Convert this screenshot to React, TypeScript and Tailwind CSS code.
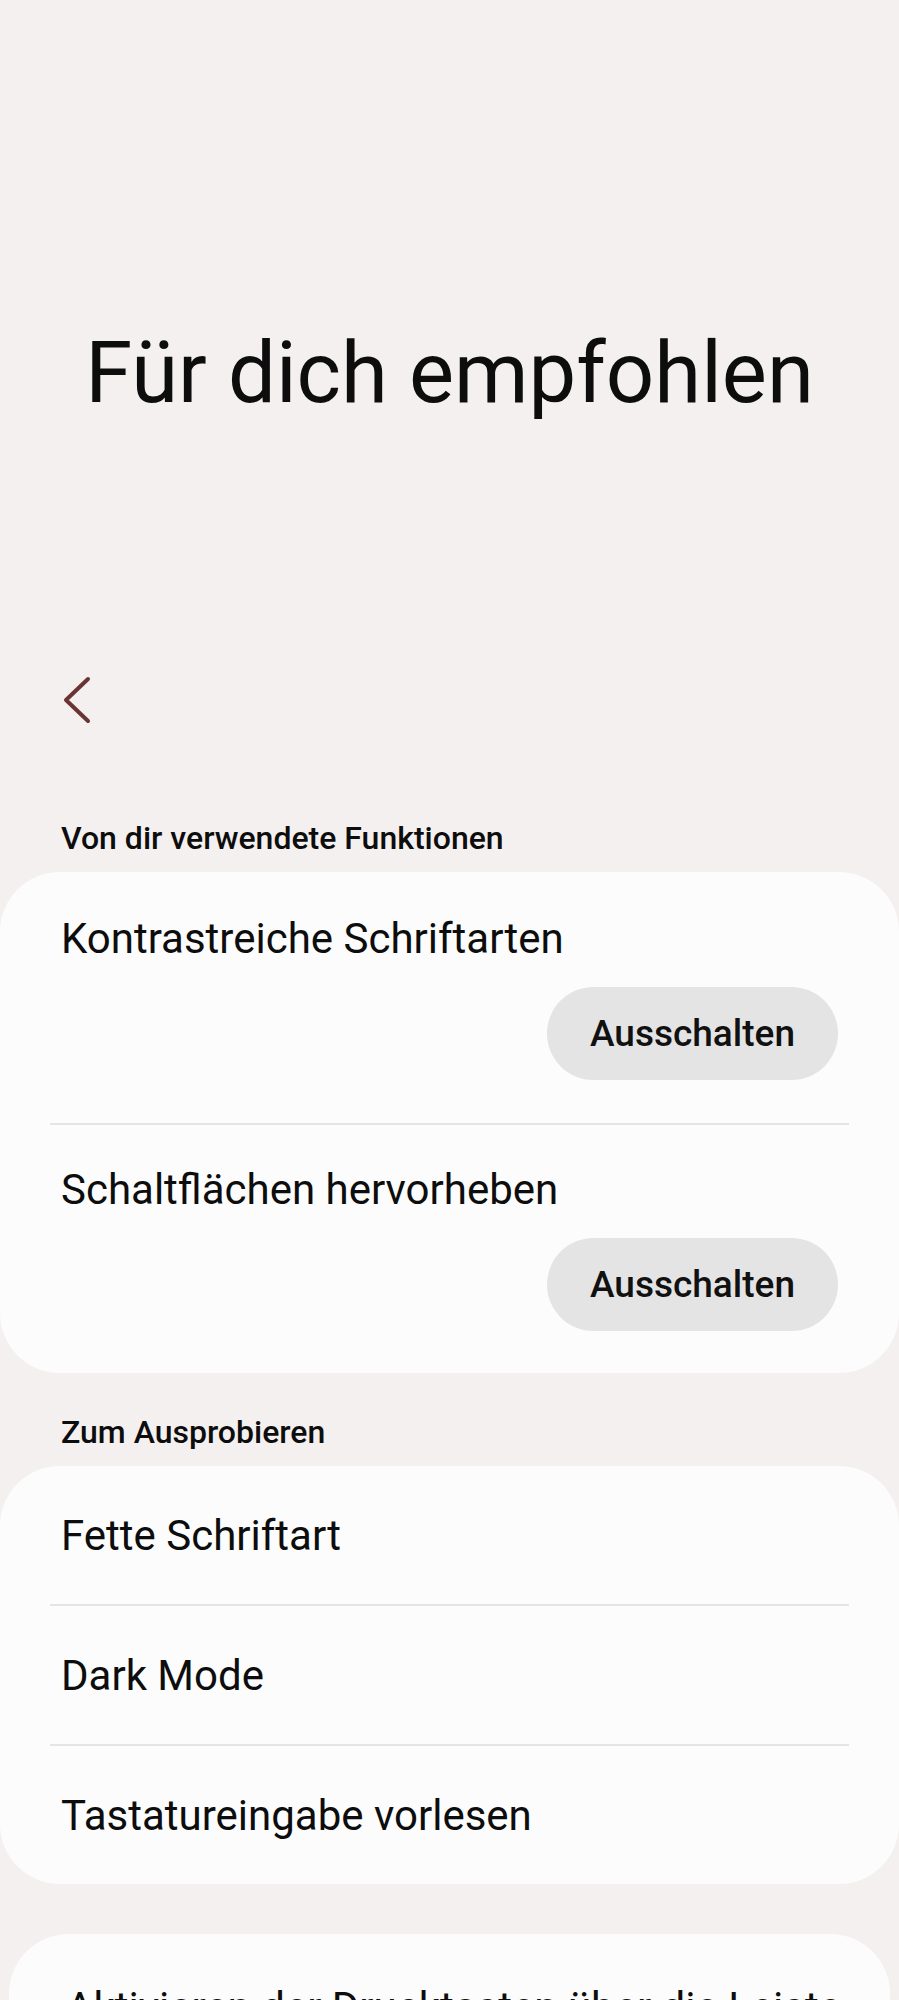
import React from 'react';

type Feature = { id: string; label: string };

const usedFeatures: Feature[] = [
  { id: 'contrast', label: 'Kontrastreiche Schriftarten' },
  { id: 'highlight', label: 'Schaltflächen hervorheben' },
];

const tryFeatures: Feature[] = [
  { id: 'bold', label: 'Fette Schriftart' },
  { id: 'dark', label: 'Dark Mode' },
  { id: 'keyboard', label: 'Tastatureingabe vorlesen' },
];

function Divider() {
  return <div className="mx-[50px] h-[2px] bg-[#e6e4e4]" />;
}

function BackChevron() {
  return (
    <svg width="48" height="48" viewBox="0 0 48 48" fill="none">
      <path
        d="M35 3 L13 24 L35 45"
        stroke="#6b3434"
        strokeWidth="4"
        strokeLinecap="round"
        strokeLinejoin="round"
      />
    </svg>
  );
}

export default function App() {
  return (
    <div className="min-h-screen bg-[#f4f0f0] font-['Roboto',sans-serif] text-[#0d0d0d] overflow-hidden">
      <h1 className="pt-[331px] text-center text-[85px] leading-none font-normal">Für dich empfohlen</h1>

      <div className="mt-[260px] pl-[53px]">
        <button className="block">
          <BackChevron />
        </button>
      </div>

      <h2 className="mt-[96px] pl-[61px] text-[32px] leading-[36px] font-medium">Von dir verwendete Funktionen</h2>

      <div className="mt-4 rounded-[60px] bg-[#fcfcfc]">
        {usedFeatures.map((f, i) => (
          <div key={f.id}>
            {i > 0 && <Divider />}
            <div className={`pl-[61px] pr-[61px] ${i === 0 ? 'pt-[43px] pb-[43px]' : 'pt-[41px] pb-[42px]'}`}>
              <div className="text-[42px] leading-[48px]">{f.label}</div>
              <div className="mt-6 flex justify-end">
                <button className="h-[93px] w-[291px] rounded-full bg-[#e4e4e4] text-[37px] font-medium text-[#111]">
                  Ausschalten
                </button>
              </div>
            </div>
          </div>
        ))}
      </div>

      <h2 className="mt-[41px] pl-[61px] text-[32px] leading-[36px] font-medium">Zum Ausprobieren</h2>

      <div className="mt-4 rounded-[60px] bg-[#fcfcfc]">
        {tryFeatures.map((f, i) => (
          <div key={f.id}>
            {i > 0 && <Divider />}
            <div className="flex h-[138px] items-center px-[61px] text-[42px]">{f.label}</div>
          </div>
        ))}
      </div>

      <div className="mx-[9px] mt-[50px] rounded-[60px] bg-[#fcfcfc] pl-[57px] pt-[50px] pb-10">
        <div className="text-[42px] leading-[48px]">Aktivieren der Drucktasten über die Leiste</div>
      </div>
    </div>
  );
}
